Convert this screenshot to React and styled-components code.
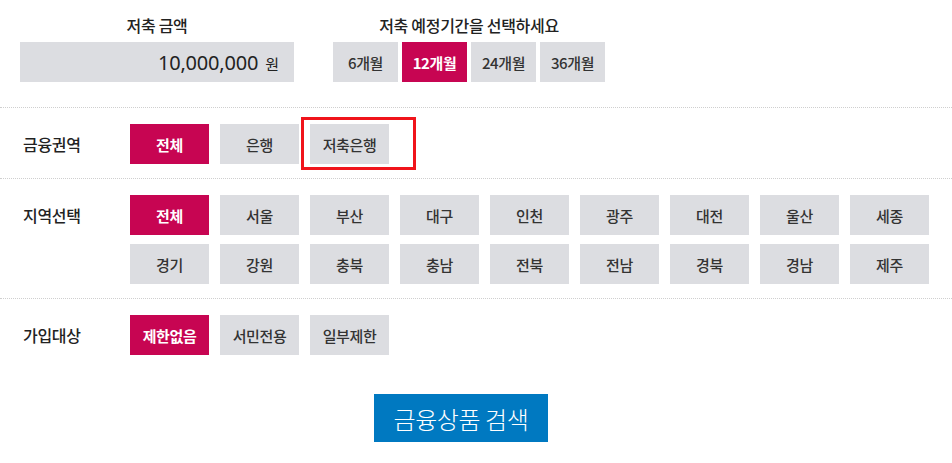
import React from "react";
import styled, { createGlobalStyle } from "styled-components";

const Global = createGlobalStyle`
  html, body { margin: 0; padding: 0; background: #fff; }
  body { font-family: "Noto Sans CJK KR", "Noto Sans", sans-serif; color: #333; }
  * { box-sizing: border-box; }
`;

const C = {
  gray: "#dcdde1",
  magenta: "#c70552",
  blue: "#0079c1",
  line: "#cfcfcf",
  text: "#333",
};

const Page = styled.div`
  width: 952px;
  height: 463px;
  overflow: hidden;
`;

const Top = styled.div`
  display: flex;
  gap: 39px;
  padding: 15px 0 25px 20px;
`;

const Group = styled.div`
  display: flex;
  flex-direction: column;
  align-items: center;
  width: ${(p) => p.$w}px;
`;

const GroupTitle = styled.div`
  font-size: 16px;
  line-height: 20px;
  font-weight: 500;
  color: #222;
  margin-bottom: 7px;
  letter-spacing: -0.3px;
`;

const AmountBox = styled.div`
  width: 100%;
  height: 40px;
  background: ${C.gray};
  display: flex;
  align-items: center;
  justify-content: flex-end;
  padding-right: 15px;
  color: #222;
`;

const AmountNum = styled.span`
  font-family: "Noto Sans", "Noto Sans CJK KR", sans-serif;
  font-size: 20px;
  letter-spacing: -0.2px;
`;

const AmountUnit = styled.span`
  font-size: 15px;
  margin-left: 7px;
  margin-top: 2px;
`;

const PeriodList = styled.div`
  display: flex;
  gap: 4px;
`;

const Chip = styled.button`
  width: ${(p) => p.$w || 79}px;
  height: 40px;
  border: 0;
  padding: 0;
  margin: 0;
  font-family: "Noto Sans CJK KR", sans-serif;
  font-size: 15px;
  font-weight: ${(p) => (p.$active ? 700 : 500)};
  letter-spacing: -0.4px;
  background: ${(p) => (p.$active ? C.magenta : C.gray)};
  color: ${(p) => (p.$active ? "#fff" : C.text)};
  display: flex;
  align-items: center;
  justify-content: center;
  position: relative;
  cursor: pointer;
`;

const Highlight = styled.span`
  position: absolute;
  left: -9px;
  top: -7px;
  width: 115px;
  height: 53px;
  border: 3px solid #f0141b;
  pointer-events: none;
`;

const Section = styled.div`
  display: flex;
  align-items: flex-start;
  padding: 16px 0 14px;
  border-top: 1px dotted ${C.line};
`;

const Label = styled.div`
  width: 130px;
  padding-left: 23px;
  line-height: 40px;
  font-size: 16px;
  font-weight: 500;
  color: #222;
  letter-spacing: -0.3px;
`;

const ChipGrid = styled.div`
  display: grid;
  grid-template-columns: repeat(${(p) => p.$cols}, 79px);
  column-gap: 11px;
  row-gap: 9px;
`;

const Footer = styled.div`
  display: flex;
  justify-content: center;
  padding: 25px 30px 0 0;
`;

const SearchButton = styled.button`
  width: 174px;
  height: 48px;
  border: 0;
  background: ${C.blue};
  color: #fff;
  font-family: "Noto Sans CJK KR", sans-serif;
  font-size: 24px;
  font-weight: 300;
  letter-spacing: -0.4px;
  cursor: pointer;
`;

const periods = ["6개월", "12개월", "24개월", "36개월"];
const sectors = ["전체", "은행", "저축은행"];
const regions = [
  "전체", "서울", "부산", "대구", "인천", "광주", "대전", "울산", "세종",
  "경기", "강원", "충북", "충남", "전북", "전남", "경북", "경남", "제주",
];
const targets = ["제한없음", "서민전용", "일부제한"];

export default function App() {
  return (
    <Page>
      <Global />
      <Top>
        <Group $w={274}>
          <GroupTitle>저축 금액</GroupTitle>
          <AmountBox>
            <AmountNum>10,000,000</AmountNum>
            <AmountUnit>원</AmountUnit>
          </AmountBox>
        </Group>
        <Group $w={272}>
          <GroupTitle>저축 예정기간을 선택하세요</GroupTitle>
          <PeriodList>
            {periods.map((p) => (
              <Chip key={p} $w={65} $active={p === "12개월"}>
                {p}
              </Chip>
            ))}
          </PeriodList>
        </Group>
      </Top>

      <Section>
        <Label>금융권역</Label>
        <ChipGrid $cols={3}>
          {sectors.map((s, i) => (
            <Chip key={s} $active={i === 0}>
              {s}
              {s === "저축은행" && <Highlight />}
            </Chip>
          ))}
        </ChipGrid>
      </Section>

      <Section>
        <Label>지역선택</Label>
        <ChipGrid $cols={9}>
          {regions.map((r, i) => (
            <Chip key={r + i} $active={i === 0}>
              {r}
            </Chip>
          ))}
        </ChipGrid>
      </Section>

      <Section>
        <Label>가입대상</Label>
        <ChipGrid $cols={3}>
          {targets.map((t, i) => (
            <Chip key={t} $active={i === 0}>
              {t}
            </Chip>
          ))}
        </ChipGrid>
      </Section>

      <Footer>
        <SearchButton>금융상품 검색</SearchButton>
      </Footer>
    </Page>
  );
}
